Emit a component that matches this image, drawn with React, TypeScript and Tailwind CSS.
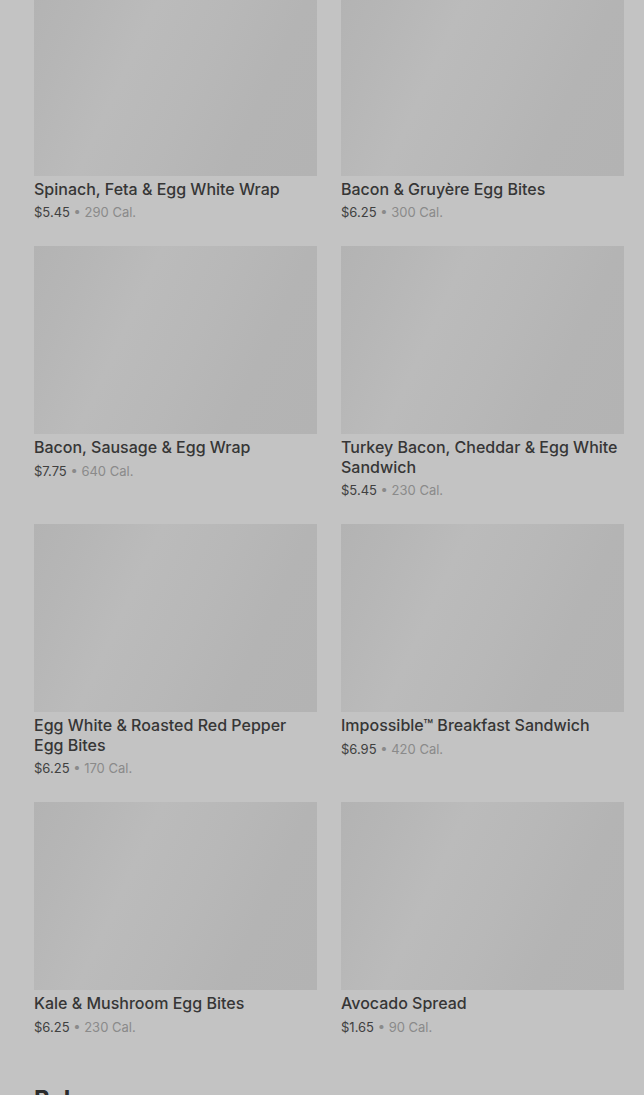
const ITEMS: { name: string; price: string; cal: string }[] = [
  { name: "Spinach, Feta & Egg White Wrap", price: "$5.45", cal: "290 Cal." },
  { name: "Bacon & Gruyère Egg Bites", price: "$6.25", cal: "300 Cal." },
  { name: "Bacon, Sausage & Egg Wrap", price: "$7.75", cal: "640 Cal." },
  { name: "Turkey Bacon, Cheddar & Egg White Sandwich", price: "$5.45", cal: "230 Cal." },
  { name: "Egg White & Roasted Red Pepper Egg Bites", price: "$6.25", cal: "170 Cal." },
  { name: "Impossible™ Breakfast Sandwich", price: "$6.95", cal: "420 Cal." },
  { name: "Kale & Mushroom Egg Bites", price: "$6.25", cal: "230 Cal." },
  { name: "Avocado Spread", price: "$1.65", cal: "90 Cal." },
];

function MenuCard({ name, price, cal }: { name: string; price: string; cal: string }) {
  return (
    <div className="flex flex-col pb-[25px]">
      <div className="h-[188px] w-full bg-[linear-gradient(115deg,#b3b3b3_0%,#b6b6b6_15%,#bbbbbb_35%,#b8b8b8_55%,#b4b4b4_75%,#b3b3b3_100%)]" />
      <h3 className="mt-[4px] text-[16px] leading-[19.5px] font-medium text-[#363636]">{name}</h3>
      <p className="mt-[4px] text-[13px] leading-[18px] text-[#404040]">
        {price}
        <span className="text-[#8a8a8a]"> • {cal}</span>
      </p>
    </div>
  );
}

export default function App() {
  return (
    <main className="h-[1095px] overflow-hidden bg-[#c3c3c3] font-['Inter',sans-serif]">
      <div className="-mt-[12.5px] pl-[34px] pr-[20px]">
        <div className="grid grid-cols-2 gap-x-[24px]">
          {ITEMS.map((item) => (
            <MenuCard key={item.name} {...item} />
          ))}
        </div>
        <h2 className="mt-[24px] text-[24px] leading-[30px] font-bold text-[#2b2b2b]">Bakery</h2>
      </div>
    </main>
  );
}
